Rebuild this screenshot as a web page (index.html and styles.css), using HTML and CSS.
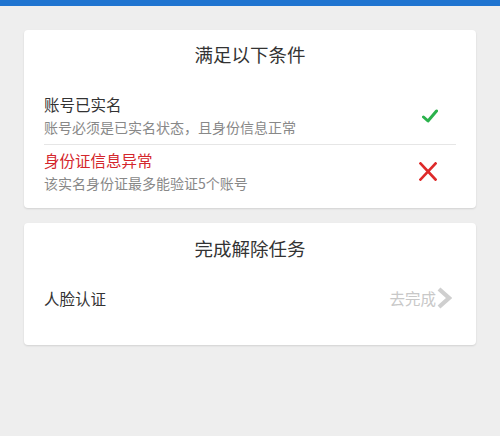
FILE: index.html
```html
<!DOCTYPE html>
<html lang="zh">
<head>
<meta charset="utf-8">
<title>解除条件</title>
<link rel="stylesheet" href="styles.css">
</head>
<body>
<div class="topbar"></div>
<main class="page">
  <section class="card card-conditions">
    <h2 class="card-title">满足以下条件</h2>
    <div class="cond-row">
      <div class="cond-text">
        <div class="cond-name">账号已实名</div>
        <div class="cond-desc">账号必须是已实名状态，且身份信息正常</div>
      </div>
      <svg class="icon icon-check" viewBox="0 0 16 14" width="16" height="14" aria-hidden="true">
        <path d="M1.5 8 L6 12 L14.5 2" fill="none" stroke="#2bb24c" stroke-width="3" stroke-linecap="round" stroke-linejoin="round"/>
      </svg>
    </div>
    <div class="cond-row">
      <div class="cond-text">
        <div class="cond-name cond-bad">身份证信息异常</div>
        <div class="cond-desc">该实名身份证最多能验证5个账号</div>
      </div>
      <svg class="icon icon-cross" viewBox="0 0 18 19" width="18" height="19" aria-hidden="true">
        <path d="M1.5 1.5 L16.5 17.5 M16.5 1.5 L1.5 17.5" fill="none" stroke="#de2a2a" stroke-width="2.6" stroke-linecap="square"/>
      </svg>
    </div>
  </section>
  <section class="card card-tasks">
    <h2 class="card-title">完成解除任务</h2>
    <div class="task-row">
      <span class="task-name">人脸认证</span>
      <span class="task-action">去完成<svg class="chevron" viewBox="0 0 16 22" width="16" height="22" aria-hidden="true"><path d="M3 2 L13 11 L3 20" fill="none" stroke="#cfcfcf" stroke-width="4.2" stroke-linejoin="miter"/></svg></span>
    </div>
  </section>
</main>
</body>
</html>
```
FILE: styles.css
```css
html, body {
  margin: 0;
  padding: 0;
}
body {
  background: #eeeeee;
  font-family: "Noto Sans CJK SC", "Noto Sans", sans-serif;
  color: #333333;
  min-height: 436px;
}
.topbar {
  height: 6px;
  background: #1f74d0;
}
.page {
  padding: 24px 24px 0;
  display: flex;
  flex-direction: column;
  gap: 15px;
}
.card {
  background: #ffffff;
  border-radius: 4px;
  box-shadow: 0 1px 2px rgba(0, 0, 0, 0.12);
  padding: 0 20px;
}
.card-title {
  margin: 0;
  font-weight: normal;
  font-size: 18.5px;
  line-height: 24px;
  text-align: center;
  color: #333333;
}
.card-conditions {
  padding-top: 12px;
  padding-bottom: 8px;
}
.card-conditions .card-title {
  margin-bottom: 23px;
}
.cond-row {
  display: flex;
  align-items: center;
  justify-content: space-between;
  padding: 5px 0 7px;
}
.cond-row + .cond-row {
  border-top: 1px solid #e6e6e6;
}
.cond-text {
  display: flex;
  flex-direction: column;
  gap: 3px;
}
.cond-name {
  font-size: 15.5px;
  line-height: 20px;
  color: #333333;
}
.cond-bad {
  color: #d4262c;
}
.cond-desc {
  font-size: 14px;
  line-height: 20px;
  color: #888888;
}
.icon {
  flex: none;
}
.icon-check {
  margin-right: 18px;
}
.icon-cross {
  margin-right: 19px;
}
.card-tasks {
  padding-top: 13px;
  padding-bottom: 17px;
}
.task-row {
  height: 60px;
  margin-top: 8px;
  display: flex;
  align-items: center;
  justify-content: space-between;
}
.task-name {
  font-size: 15.5px;
  line-height: 20px;
  color: #333333;
}
.task-action {
  display: flex;
  align-items: center;
  font-size: 15.5px;
  line-height: 20px;
  color: #c8c8c8;
  margin-right: 4px;
}
.chevron {
  display: block;
  margin-top: 0;
}
```
